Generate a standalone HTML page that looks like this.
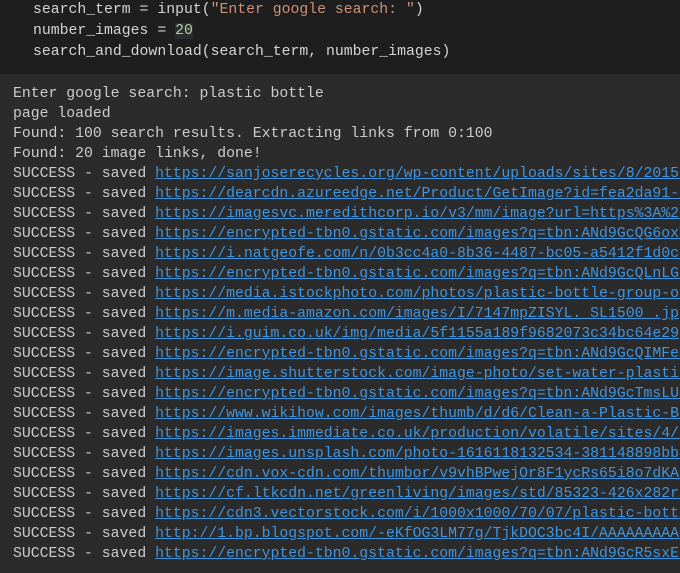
<!DOCTYPE html><html><head><style>
body{margin:0;width:680px;height:573px;overflow:hidden;background:#2b2b2b;font-family:"Liberation Mono",monospace;font-size:14.8px;}
.code{background:#1e1e1e;height:74px;padding-left:33px;box-sizing:border-box;padding-top:0;color:#d4d4d4}
.code div{height:21px;line-height:21px;white-space:pre}
.s{color:#ce9178}.n{color:#b5cea8;background:#2a2d2e}
.out{padding-left:13px;padding-top:10px;color:#cccccc}
.out div{height:20px;line-height:20px;white-space:pre}
a{color:#3f95e0;text-decoration:underline}
</style></head><body>
<div class="code"><div>search_term = input(<span class="s">"Enter google search: "</span>)</div><div>number_images = <span class="n">20</span></div><div>search_and_download(search_term, number_images)</div></div>
<div class="out"><div>Enter google search: plastic bottle</div><div>page loaded</div><div>Found: 100 search results. Extracting links from 0:100</div><div>Found: 20 image links, done!</div><div>SUCCESS - saved <a>https://sanjoserecycles.org/wp-content/uploads/sites/8/2015/</a></div><div>SUCCESS - saved <a>https://dearcdn.azureedge.net/Product/GetImage?id=fea2da91-d</a></div><div>SUCCESS - saved <a>https://imagesvc.meredithcorp.io/v3/mm/image?url=https%3A%2F</a></div><div>SUCCESS - saved <a>https://encrypted-tbn0.gstatic.com/images?q=tbn:ANd9GcQG6oxT</a></div><div>SUCCESS - saved <a>https://i.natgeofe.com/n/0b3cc4a0-8b36-4487-bc05-a5412f1d0c1</a></div><div>SUCCESS - saved <a>https://encrypted-tbn0.gstatic.com/images?q=tbn:ANd9GcQLnLGc</a></div><div>SUCCESS - saved <a>https://media.istockphoto.com/photos/plastic-bottle-group-or</a></div><div>SUCCESS - saved <a>https://m.media-amazon.com/images/I/7147mpZISYL._SL1500_.jpg</a></div><div>SUCCESS - saved <a>https://i.guim.co.uk/img/media/5f1155a189f9682073c34bc64e29</a></div><div>SUCCESS - saved <a>https://encrypted-tbn0.gstatic.com/images?q=tbn:ANd9GcQIMFeM</a></div><div>SUCCESS - saved <a>https://image.shutterstock.com/image-photo/set-water-plastic</a></div><div>SUCCESS - saved <a>https://encrypted-tbn0.gstatic.com/images?q=tbn:ANd9GcTmsLUS</a></div><div>SUCCESS - saved <a>https://www.wikihow.com/images/thumb/d/d6/Clean-a-Plastic-Bo</a></div><div>SUCCESS - saved <a>https://images.immediate.co.uk/production/volatile/sites/4/2</a></div><div>SUCCESS - saved <a>https://images.unsplash.com/photo-1616118132534-381148898bb4</a></div><div>SUCCESS - saved <a>https://cdn.vox-cdn.com/thumbor/v9vhBPwejOr8F1ycRs65i8o7dKA=</a></div><div>SUCCESS - saved <a>https://cf.ltkcdn.net/greenliving/images/std/85323-426x282r1</a></div><div>SUCCESS - saved <a>https://cdn3.vectorstock.com/i/1000x1000/70/07/plastic-bottl</a></div><div>SUCCESS - saved <a>http://1.bp.blogspot.com/-eKfOG3LM77g/TjkDOC3bc4I/AAAAAAAAAC</a></div><div>SUCCESS - saved <a>https://encrypted-tbn0.gstatic.com/images?q=tbn:ANd9GcR5sxEt</a></div></div>
</body></html>
